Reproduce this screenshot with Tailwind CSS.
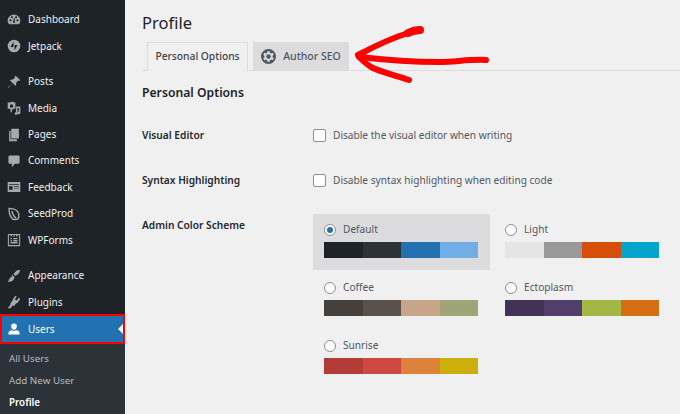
<!DOCTYPE html>
<html lang="en">
  <head>
    <meta charset="UTF-8" />
    <meta name="viewport" content="width=device-width, initial-scale=1.0" />
    <title>Profile</title>
    <script src="https://cdn.jsdelivr.net/npm/@tailwindcss/browser@4"></script>
  </head>
  <body class="relative flex w-[680px] h-[414px] overflow-hidden bg-[#f0f0f1] font-['Noto_Sans','Open_Sans',sans-serif] text-[10.15px]">
    <!-- Sidebar -->
    <aside class="w-[125px] h-full shrink-0 flex flex-col pt-[6.5px] bg-[#1d2327] text-[#f0f0f1] text-[10px]">
      <div class="flex items-center h-[26.5px] pl-[7px] gap-[7px]">
        <svg class="w-[14px] h-[14px] fill-[#a7aaad]" viewBox="0 0 20 20"><path d="M10 2a9 9 0 0 0-8.500 12c.4 1.200 1.400 2 2.700 2h11.600c1.300 0 2.300-.8 2.700-2A9 9 0 0 0 10 2zM5 12a1.500 1.500 0 1 1 0-3 1.500 1.500 0 0 1 0 3zm2-4.500a1.500 1.500 0 1 1 0-3 1.500 1.500 0 0 1 0 3zM11.500 14h-3l1-5 1-3 .5 3zM13 7.500a1.500 1.500 0 1 1 0-3 1.500 1.500 0 0 1 0 3zm2 4.500a1.500 1.500 0 1 1 0-3 1.500 1.500 0 0 1 0 3z"/></svg>
        <span>Dashboard</span>
      </div>
      <div class="flex items-center h-[26.5px] pl-[7px] gap-[7px]">
        <svg class="w-[14px] h-[14px] fill-[#a7aaad]" viewBox="0 0 20 20"><path fill-rule="evenodd" d="M10 1a9 9 0 1 0 0 18 9 9 0 0 0 0-18zM9.200 11.500H5l4.200-8zm1.600 5V8.500H15z"/></svg>
        <span>Jetpack</span>
      </div>
      <div class="flex items-center h-[26.5px] pl-[7px] gap-[7px] mt-[9px]">
        <svg class="w-[14px] h-[14px] fill-[#a7aaad]" viewBox="0 0 20 20"><path d="M12.500 1 19 7.500l-1.500 1-1.500-.5-3 3c.5 2 0 3.500-1 4.500L8 11.500 1.500 18.500 1 18l7-6.500L4 7.500c1-1 2.500-1.500 4.500-1l3-3-.5-1.500z"/></svg>
        <span>Posts</span>
      </div>
      <div class="flex items-center h-[26.5px] pl-[7px] gap-[7px]">
        <svg class="w-[14px] h-[14px] fill-[#a7aaad]" viewBox="0 0 20 20"><path fill-rule="evenodd" d="M1 2h4l1-1h3l1 1h2v9H8v2H7v3H5v-5H1zm5.500 2.500a2.500 2.500 0 1 0 0 5 2.500 2.500 0 0 0 0-5zM13 8h6v9a2 2 0 1 1-2-2V10h-2v8a2 2 0 1 1-2-2z"/></svg>
        <span>Media</span>
      </div>
      <div class="flex items-center h-[26.5px] pl-[7px] gap-[7px]">
        <svg class="w-[14px] h-[14px] fill-[#a7aaad]" viewBox="0 0 20 20"><path d="M6 1h11v14H6zM3 4h2v12h9v3H3z"/></svg>
        <span>Pages</span>
      </div>
      <div class="flex items-center h-[26.5px] pl-[7px] gap-[7px]">
        <svg class="w-[14px] h-[14px] fill-[#a7aaad]" viewBox="0 0 20 20"><path d="M4 2h12a2 2 0 0 1 2 2v8a2 2 0 0 1-2 2h-5l-4 5v-5H4a2 2 0 0 1-2-2V4a2 2 0 0 1 2-2z"/></svg>
        <span>Comments</span>
      </div>
      <div class="flex items-center h-[26.5px] pl-[7px] gap-[7px]">
        <svg class="w-[14px] h-[14px] fill-[#a7aaad]" viewBox="0 0 20 20"><path fill-rule="evenodd" d="M1 3h18v14H1zm2 3v1h14V6zm0 3v5h5V9zm7 0v1h7V9zm0 3v1h7v-1z"/></svg>
        <span>Feedback</span>
      </div>
      <div class="flex items-center h-[26.5px] pl-[7px] gap-[7px]">
        <svg class="w-[14px] h-[14px] fill-none stroke-[#a7aaad] stroke-[2]" viewBox="0 0 20 20"><path d="M3 2c7 0 14 3 14 11 0 3-2 5-5 5-6 0-9-6-9-16zM7 6c1 5 3 8 6 10"/></svg>
        <span>SeedProd</span>
      </div>
      <div class="flex items-center h-[26.5px] pl-[7px] gap-[7px]">
        <svg class="w-[14px] h-[14px] fill-none stroke-[#a7aaad]" viewBox="0 0 20 20"><path stroke-width="1.500" d="M2 2h16v16H2z"/><path stroke-width="2" d="M6 2v3M10 2v3M14 2v3M5 8h2M9 8h6M5 11h2M9 11h6M5 14h10"/></svg>
        <span>WPForms</span>
      </div>
      <div class="flex items-center h-[26.5px] pl-[7px] gap-[7px] mt-[9px]">
        <svg class="w-[14px] h-[14px] fill-[#a7aaad]" viewBox="0 0 20 20"><path d="M14 2c2-1 4-1 5 0l-1 2-2 3-4 3-3-3zM7 8l4 4-1 2c-1 3-5 5-9 4 2-1 2-3 3-5 1-1 2-2 3-2z"/></svg>
        <span>Appearance</span>
      </div>
      <div class="flex items-center h-[26.5px] pl-[7px] gap-[7px]">
        <svg class="w-[14px] h-[14px] fill-[#a7aaad]" viewBox="0 0 20 20"><path d="M12 1l2 1-3 4 3 2 3-4 2 1.500-3 4.500c-1 1.500-2 2-3 2l-2 2.500c-1 1-2 1.500-3.500 1L5 19H1l4-5c-.5-1.500 0-2.500 1-3.500L8 8c0-1 .5-2 1-3z"/></svg>
        <span>Plugins</span>
      </div>
      <div class="relative flex items-center h-[30px] pl-[5px] gap-[7px] -mb-[1px] -mt-[1px] border-[2px] border-[#f00] bg-[#2271b1] text-white">
        <svg class="w-[14px] h-[14px] fill-white" viewBox="0 0 20 20"><path d="M10 2a4 4 0 0 1 4 4.500c0 2.500-1.800 4.500-4 4.500S6 9 6 6.500A4 4 0 0 1 10 2zM7 11.500c1 1 2 1.500 3 1.500s2-.5 3-1.500c3 .5 5 2 5 4.500v2H2v-2c0-2.500 2-4 5-4.500z"/></svg>
        <span>Users</span>
        <div class="absolute right-0 top-[8px] border-y-[5px] border-y-transparent border-r-[5px] border-r-[#f0f0f1]"></div>
      </div>
      <div class="flex-1 flex flex-col pt-[4.5px] bg-[#2c3338] text-[#b4b9be] text-[9.8px]">
        <div class="flex items-center h-[22px] pl-[9px]">All Users</div>
        <div class="flex items-center h-[22px] pl-[9px]">Add New User</div>
        <div class="flex items-center h-[22px] pl-[9px] font-semibold text-white">Profile</div>
      </div>
    </aside>

    <!-- Main -->
    <main class="flex-1 flex flex-col pt-[10px] pl-[17px] text-[#50575e]">
      <h1 class="h-[26px] text-[16.5px] leading-[25px] text-[#1d2327]">Profile</h1>
      <div class="flex items-end h-[35px] pl-[5px] gap-[5px] border-b border-[#dcdcde]">
        <div class="flex items-center justify-center w-[101px] h-[29px] -mb-[1px] border border-b-0 border-[#dcdcde] bg-[#f0f0f1] font-medium text-[#3c434a] text-[10.25px]">Personal Options</div>
        <div class="flex items-center justify-center gap-[7px] w-[96px] h-[28px] border border-b-0 border-[#dcdcde] bg-[#dcdcde] font-medium text-[#50575e] text-[10.5px]">
          <svg class="w-[15px] h-[15px] fill-[#50575e]" viewBox="0 0 20 20"><path fill-rule="evenodd" d="M10 0a10 10 0 1 0 0 20 10 10 0 0 0 0-20zM8.500 3h3l.4 2 1.700.9 1.900-.8 1.500 2.600-1.600 1.300v2l1.600 1.300-1.500 2.600-1.900-.8-1.700.9-.4 2h-3l-.4-2-1.700-.9-1.900.8-1.500-2.600L4.600 11V9L3 7.700l1.500-2.600 1.900.8 1.700-.9zM10 7a3 3 0 1 0 0 6 3 3 0 0 0 0-6z"/></svg>
          <span>Author SEO</span>
        </div>
      </div>
      <h2 class="mt-[13px] h-[18px] text-[12.2px] leading-[18px] font-semibold text-[#1d2327]">Personal Options</h2>

      <div class="flex items-center h-[20px] mt-[23px]">
        <div class="w-[171px] pt-[2px] font-semibold text-[#23282d] text-[10.2px]">Visual Editor</div>
        <div class="w-[13px] h-[13px] rounded-[2px] border border-[#8c8f94] bg-white"></div>
        <span class="ml-[7px] pt-[2px]">Disable the visual editor when writing</span>
      </div>
      <div class="flex items-center h-[20px] mt-[25px]">
        <div class="w-[171px] pt-[2px] font-semibold text-[#23282d] text-[10.2px]">Syntax Highlighting</div>
        <div class="w-[13px] h-[13px] rounded-[2px] border border-[#8c8f94] bg-white"></div>
        <span class="ml-[7px] pt-[2px]">Disable syntax highlighting when editing code</span>
      </div>

      <div class="flex mt-[25px]">
        <div class="w-[171px] h-[20px] leading-[20px] font-semibold text-[#23282d] text-[10.2px]">Admin Color Scheme</div>
        <div class="grid grid-cols-[177px_177px] auto-rows-[58px] gap-x-[15px] -mt-[1px]">
          <div class="h-[56px] pt-[9px] pl-[11px] pr-[12px] bg-[#dcdcde]">
            <div class="flex items-center h-[14px] gap-[7px]">
              <div class="flex items-center justify-center w-[12px] h-[12px] rounded-full border border-[#8c8f94] bg-white"><div class="w-[6px] h-[6px] rounded-full bg-[#2271b1]"></div></div>
              <span>Default</span>
            </div>
            <div class="flex h-[16px] mt-[5px]">
              <div class="flex-1 bg-[#1d2327]"></div><div class="flex-1 bg-[#2c3338]"></div><div class="flex-1 bg-[#2271b1]"></div><div class="flex-1 bg-[#72aee6]"></div>
            </div>
          </div>
          <div class="pt-[9px] w-[162px]">
            <div class="flex items-center h-[14px] gap-[7px]">
              <div class="w-[12px] h-[12px] rounded-full border border-[#8c8f94] bg-white"></div>
              <span>Light</span>
            </div>
            <div class="flex h-[16px] mt-[5px] w-[154px]">
              <div class="flex-1 bg-[#e5e5e5]"></div><div class="flex-1 bg-[#999999]"></div><div class="flex-1 bg-[#d64e07]"></div><div class="flex-1 bg-[#04a4cc]"></div>
            </div>
          </div>
          <div class="pt-[9px] pl-[11px] pr-[12px]">
            <div class="flex items-center h-[14px] gap-[7px]">
              <div class="w-[12px] h-[12px] rounded-full border border-[#8c8f94] bg-white"></div>
              <span>Coffee</span>
            </div>
            <div class="flex h-[16px] mt-[5px]">
              <div class="flex-1 bg-[#46403c]"></div><div class="flex-1 bg-[#59524c]"></div><div class="flex-1 bg-[#c7a589]"></div><div class="flex-1 bg-[#9ea476]"></div>
            </div>
          </div>
          <div class="pt-[9px] w-[162px]">
            <div class="flex items-center h-[14px] gap-[7px]">
              <div class="w-[12px] h-[12px] rounded-full border border-[#8c8f94] bg-white"></div>
              <span>Ectoplasm</span>
            </div>
            <div class="flex h-[16px] mt-[5px] w-[154px]">
              <div class="flex-1 bg-[#413256]"></div><div class="flex-1 bg-[#523f6d]"></div><div class="flex-1 bg-[#a3b745]"></div><div class="flex-1 bg-[#d46f15]"></div>
            </div>
          </div>
          <div class="pt-[9px] pl-[11px] pr-[12px]">
            <div class="flex items-center h-[14px] gap-[7px]">
              <div class="w-[12px] h-[12px] rounded-full border border-[#8c8f94] bg-white"></div>
              <span>Sunrise</span>
            </div>
            <div class="flex h-[16px] mt-[5px]">
              <div class="flex-1 bg-[#b43c38]"></div><div class="flex-1 bg-[#cf4944]"></div><div class="flex-1 bg-[#dd823b]"></div><div class="flex-1 bg-[#ccaf0b]"></div>
            </div>
          </div>
        </div>
      </div>
    </main>

    <!-- Hand drawn arrow -->
    <svg class="absolute left-0 top-0 w-[680px] h-[414px] pointer-events-none fill-none stroke-[#f00]" viewBox="0 0 680 414" stroke-linecap="round" stroke-linejoin="round">
      <path stroke-width="6" d="M358 55C375 46 392 38 408 33"/>
      <path stroke-width="8" d="M408 33C412 31 416 30 420 30"/>
      <path stroke-width="6" d="M359 57C364 62 367 65 373 68C384 73 398 76 409 80"/>
      <path stroke-width="6" d="M360 57C385 60 410 62 440 62C455 62 470 59 486 60"/>
    </svg>
  </body>
</html>
